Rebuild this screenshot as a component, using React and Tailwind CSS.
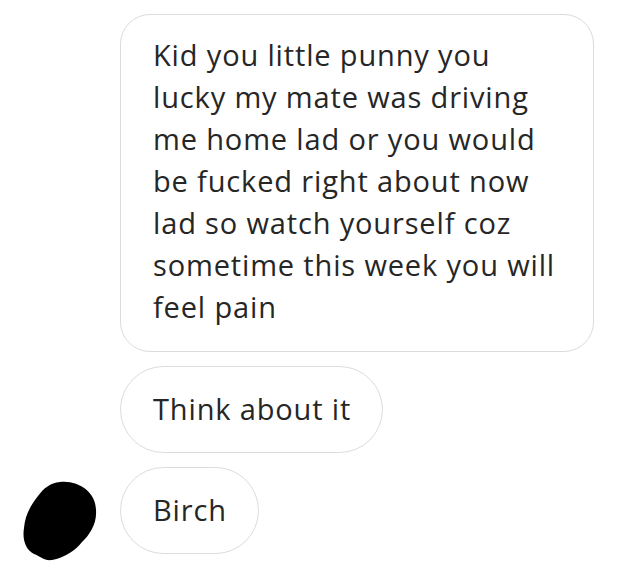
export default function App() {
  const font = { fontFamily: '"Open Sans", Arial, sans-serif' };
  const lines = [
    "Kid you little punny you",
    "lucky my mate was driving",
    "me home lad or you would",
    "be fucked right about now",
    "lad so watch yourself coz",
    "sometime this week you will",
    "feel pain",
  ];
  return (
    <div className="w-[640px] h-[581px] bg-white relative overflow-hidden" style={font}>
      <div className="flex flex-col gap-[14px] pl-[120px] pt-[14px]">
        <div className="w-[474px] h-[338px] rounded-[30px] border-[1.5px] border-[#dcdcdc] pl-[32px] pt-[19px] text-[29px] leading-[42px] tracking-[0.85px] text-[#262626] whitespace-nowrap">
          {lines.map((l, i) => (
            <div key={i}>{l}</div>
          ))}
        </div>
        <div className="self-start h-[87px] rounded-full border-[1.5px] border-[#dcdcdc] pl-[32px] pr-[31px] pb-[2px] flex items-center text-[29px] tracking-[0.85px] text-[#262626]">
          Think about it
        </div>
        <div className="flex items-center">
          <div className="h-[87px] rounded-full border-[1.5px] border-[#dcdcdc] pl-[32px] pr-[31px] pb-[2px] flex items-center text-[29px] tracking-[0.85px] text-[#262626]">
            Birch
          </div>
        </div>
      </div>
      <svg className="absolute left-[20px] top-[478px]" width="80" height="86" viewBox="0 0 80 86">
        <path d="M40 4 C58 2 76 14 76 32 C77 46 70 56 62 64 C56 72 44 80 32 82 C24 83 20 78 14 76 C6 72 2 62 4 50 C5 38 10 28 18 18 C24 10 30 5 40 4 Z" fill="#000" />
      </svg>
    </div>
  );
}
